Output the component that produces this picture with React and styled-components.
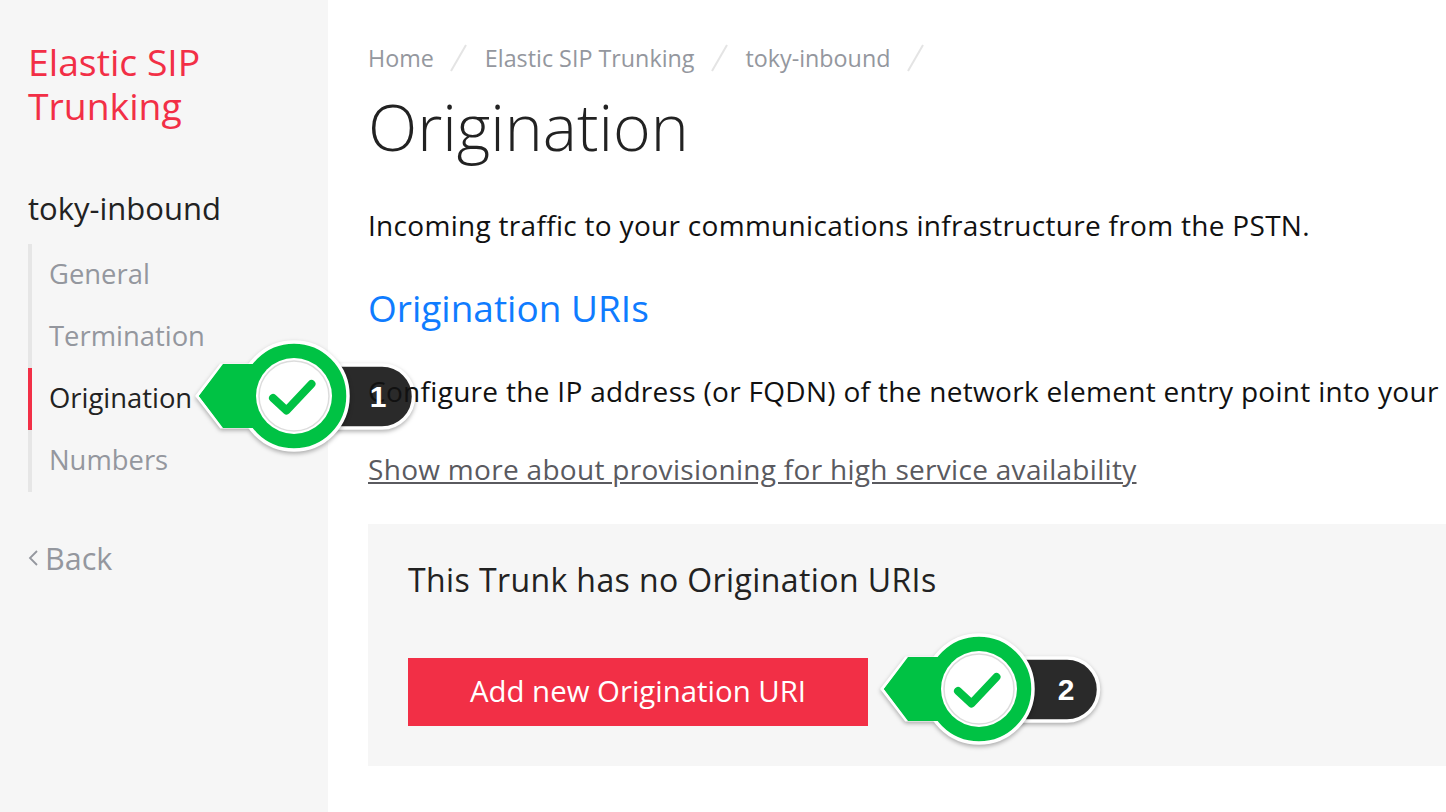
import React from "react";
import styled, { createGlobalStyle } from "styled-components";

const GlobalStyle = createGlobalStyle`
  html, body {
    margin: 0;
    padding: 0;
    background: #fff;
    overflow: hidden;
  }
  body {
    font-family: "Open Sans", "Lato", sans-serif;
    font-variant-ligatures: none;
    color: #222;
  }
`;

const Page = styled.div`
  display: flex;
  width: 1446px;
  height: 812px;
  overflow: hidden;
`;

const Sidebar = styled.aside`
  width: 328px;
  flex-shrink: 0;
  background: #f6f6f6;
  padding: 40px 0 0 28px;
  box-sizing: border-box;
`;

const Brand = styled.div`
  font-size: 37.3px;
  line-height: 44px;
  color: #f22f46;
  margin-bottom: 60px;
`;

const TrunkName = styled.div`
  font-size: 31px;
  line-height: 40px;
  font-weight: 500;
  color: #222;
  margin-bottom: 16px;
`;

const NavList = styled.nav`
  display: flex;
  flex-direction: column;
  margin-bottom: 46px;
`;

const NavItem = styled.div`
  position: relative;
  height: 62px;
  line-height: 60px;
  padding-left: 17px;
  font-size: 27.4px;
  border-left: 4px solid ${(props) => (props.$active ? "#f22f46" : "#e6e6e6")};
  color: ${(props) => (props.$active ? "#222" : "#94979e")};
`;

const BackLink = styled.div`
  display: flex;
  align-items: center;
  gap: 6px;
  font-size: 30.5px;
  line-height: 40px;
  color: #94979e;
`;

const Main = styled.main`
  flex: 1;
  padding: 40px 0 0 40px;
  min-width: 0;
`;

const Breadcrumbs = styled.div`
  display: flex;
  align-items: center;
  height: 36px;
  font-size: 23.3px;
  color: #94979e;
  white-space: nowrap;
`;

const Slash = styled.svg`
  width: 20px;
  height: 30px;
  margin: 0 15.5px;
`;

const Heading = styled.h1`
  margin: 0;
  font-size: 64.4px;
  line-height: 100px;
  font-weight: 300;
  color: #222;
  margin-bottom: 29px;
`;

const Paragraph = styled.p`
  position: relative;
  z-index: 2;
  margin: 0;
  font-size: 28px;
  letter-spacing: 0.3px;
  line-height: 40px;
  color: #111;
  white-space: nowrap;
`;

const SectionTitle = styled.h2`
  margin: 39px 0 39px;
  font-size: 37px;
  line-height: 48px;
  font-weight: 400;
  color: #0f7cff;
`;

const MoreLink = styled.a`
  display: block;
  margin: 38px 0 35px;
  font-size: 28px;
  letter-spacing: 0.3px;
  line-height: 40px;
  color: #5a5a5f;
  text-decoration: underline;
`;

const EmptyPanel = styled.section`
  background: #f6f6f6;
  height: 242px;
  box-sizing: border-box;
  padding: 36px 40px 0;
`;

const EmptyText = styled.div`
  font-size: 32px;
  letter-spacing: 0.4px;
  line-height: 40px;
  color: #222;
  margin-bottom: 58px;
`;

const ButtonRow = styled.div`
  position: relative;
  width: 460px;
`;

const AddButton = styled.button`
  display: block;
  width: 460px;
  height: 68px;
  border: 0;
  padding: 0 0 2px;
  background: #f22f46;
  color: #fff;
  font-family: inherit;
  font-size: 29.4px;
  font-weight: 500;
`;

const BadgeTail = styled.svg`
  position: absolute;
  left: ${(props) => props.$left}px;
  top: ${(props) => props.$top}px;
  z-index: 1;
  filter: drop-shadow(0 2px 2px rgba(0, 0, 0, 0.3));
`;

const BadgeHead = styled.svg`
  position: absolute;
  left: ${(props) => props.$left}px;
  top: ${(props) => props.$top}px;
  z-index: 3;
  filter: drop-shadow(0 2px 2px rgba(0, 0, 0, 0.3));
`;

const BadgeNumber = styled.span`
  position: absolute;
  left: ${(props) => props.$left}px;
  top: ${(props) => props.$top + 41}px;
  z-index: 4;
  width: 40px;
  text-align: center;
  font-family: "Liberation Sans", sans-serif;
  font-size: 30px;
  font-weight: 700;
  line-height: 40px;
  color: #fff;
`;

// tip of the arrow sits at x=6, the circle centre at x=103, y=60
function Badge({ left, top, number, numberX }) {
  return (
    <>
      <BadgeTail $left={left} $top={top} width="240" height="120" viewBox="0 0 240 120">
        <path d="M100 29H191a31.5 31.5 0 0 1 0 63H100Z" fill="#2a2a2a" stroke="#fff" strokeWidth="3.5" />
      </BadgeTail>
      <BadgeHead $left={left} $top={top} width="180" height="120" viewBox="0 0 180 120">
        <path d="M6 60L30 29H80V91H30Z" fill="#00c244" stroke="#fff" strokeWidth="3" strokeLinejoin="miter" />
        <circle cx="103" cy="60" r="54" fill="#00c244" stroke="#fff" strokeWidth="3.5" />
        <path d="M32 28H72V92H32L8 60Z" fill="#00c244" />
        <circle cx="103" cy="60" r="38" fill="#fff" />
        <circle cx="103" cy="60" r="35" fill="none" stroke="#dcdcdc" strokeWidth="1.5" />
        <path d="M82 62L95.5 74.5L120.5 48" fill="none" stroke="#00c244" strokeWidth="8" strokeLinecap="round" strokeLinejoin="round" />
      </BadgeHead>
      <BadgeNumber $left={left + numberX} $top={top}>{number}</BadgeNumber>
    </>
  );
}

const navItems = ["General", "Termination", "Origination", "Numbers"];

const crumbs = ["Home", "Elastic SIP Trunking", "toky-inbound"];

export default function App() {
  return (
    <Page>
      <GlobalStyle />
      <Sidebar>
        <Brand>
          Elastic SIP
          <br />
          Trunking
        </Brand>
        <TrunkName>toky-inbound</TrunkName>
        <NavList>
          {navItems.map((item) => (
            <NavItem key={item} $active={item === "Origination"}>
              {item}
              {item === "Origination" && <Badge left={159} top={-32} number="1" numberX={167} />}
            </NavItem>
          ))}
        </NavList>
        <BackLink>
          <svg width="11" height="18" viewBox="0 0 11 18">
            <path d="M9 2L2 9L9 16" fill="none" stroke="#94979e" strokeWidth="1.8" />
          </svg>
          Back
        </BackLink>
      </Sidebar>
      <Main>
        <Breadcrumbs>
          {crumbs.map((crumb) => (
            <React.Fragment key={crumb}>
              {crumb}
              <Slash viewBox="0 0 20 30">
                <path d="M2 28L17 2" stroke="#e4e4e4" strokeWidth="2" />
              </Slash>
            </React.Fragment>
          ))}
        </Breadcrumbs>
        <Heading>Origination</Heading>
        <Paragraph>Incoming traffic to your communications infrastructure from the PSTN.</Paragraph>
        <SectionTitle>Origination URIs</SectionTitle>
        <Paragraph>Configure the IP address (or FQDN) of the network element entry point into your communications infrastructure.</Paragraph>
        <MoreLink>Show more about provisioning for high service availability</MoreLink>
        <EmptyPanel>
          <EmptyText>This Trunk has no Origination URIs</EmptyText>
          <ButtonRow>
            <AddButton>Add new Origination URI</AddButton>
            <Badge left={468} top={-29} number="2" numberX={170} />
          </ButtonRow>
        </EmptyPanel>
      </Main>
    </Page>
  );
}
